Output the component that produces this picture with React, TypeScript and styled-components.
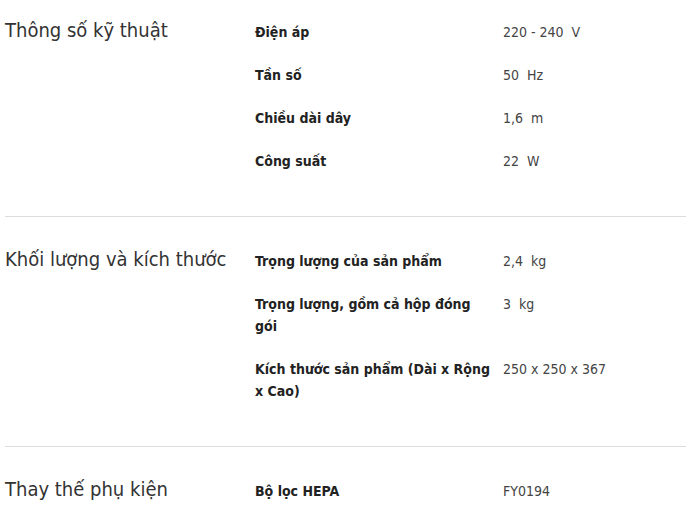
import React from "react";
import styled, { createGlobalStyle } from "styled-components";

const GlobalStyle = createGlobalStyle`
  body {
    margin: 0;
    background: #fff;
    font-family: "DejaVu Sans Condensed", "DejaVu Sans", sans-serif;
    color: #333;
  }
`;

const Page = styled.div`
  padding-left: 5px;
  overflow: hidden;
`;

const Section = styled.section`
  display: grid;
  grid-template-columns: 250px 1fr;
  padding: 33px 0 23px;
  border-top: 1px solid #dcdcdc;

  &:first-child {
    padding-top: 21px;
    border-top: none;
  }
`;

const Title = styled.h2`
  margin: -2px 0 0;
  font-size: 20px;
  font-weight: 300;
  line-height: 22px;
  color: #333;
`;

const Rows = styled.div`
  display: flex;
  flex-direction: column;
`;

const Row = styled.div`
  display: grid;
  grid-template-columns: 248px 1fr;
  padding-bottom: 21px;
  font-size: 14px;
  line-height: 22px;
`;

const Label = styled.div`
  font-weight: 700;
  color: #222;
  padding-right: 8px;
`;

const Value = styled.div`
  color: #444;
  white-space: pre;
`;

type Spec = { label: string; value: string };

const sections: { title: string; specs: Spec[] }[] = [
  {
    title: "Thông số kỹ thuật",
    specs: [
      { label: "Điện áp", value: "220 - 240  V" },
      { label: "Tần số", value: "50  Hz" },
      { label: "Chiều dài dây", value: "1,6  m" },
      { label: "Công suất", value: "22  W" },
    ],
  },
  {
    title: "Khối lượng và kích thước",
    specs: [
      { label: "Trọng lượng của sản phẩm", value: "2,4  kg" },
      { label: "Trọng lượng, gồm cả hộp đóng gói", value: "3  kg" },
      {
        label: "Kích thước sản phẩm (Dài x Rộng x Cao)",
        value: "250 x 250 x 367",
      },
    ],
  },
  {
    title: "Thay thế phụ kiện",
    specs: [{ label: "Bộ lọc HEPA", value: "FY0194" }],
  },
];

const App = () => {
  return (
    <>
      <GlobalStyle />
      <Page>
        {sections.map((s) => (
          <Section key={s.title}>
            <Title>{s.title}</Title>
            <Rows>
              {s.specs.map((sp) => (
                <Row key={sp.label}>
                  <Label>{sp.label}</Label>
                  <Value>{sp.value}</Value>
                </Row>
              ))}
            </Rows>
          </Section>
        ))}
      </Page>
    </>
  );
};

export default App;
